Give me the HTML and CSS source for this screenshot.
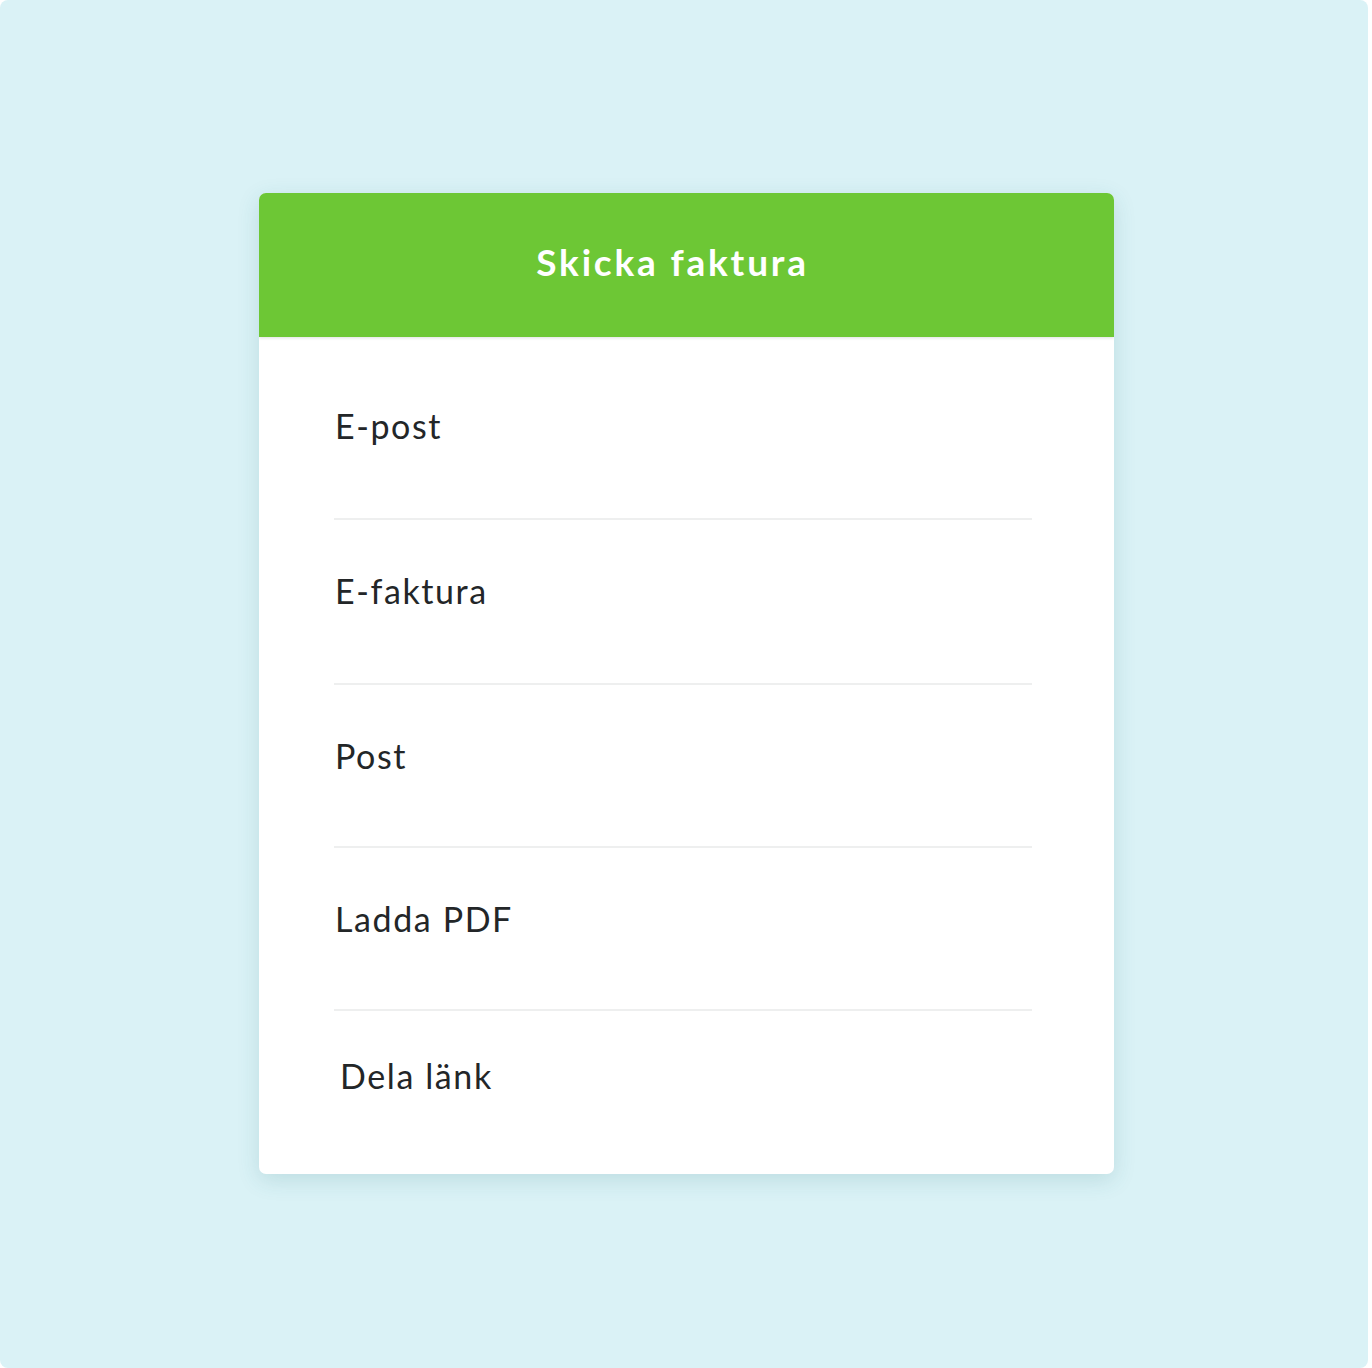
FILE: index.html
```html
<!DOCTYPE html>
<html lang="sv">
<head>
<meta charset="utf-8">
<title>Skicka faktura</title>
<link rel="stylesheet" href="styles.css">
</head>
<body>
<div class="canvas">
  <div class="card">
    <div class="card-header">Skicka faktura</div>
    <ul class="options">
      <li class="option first">E-post</li>
      <li class="option">E-faktura</li>
      <li class="option short">Post</li>
      <li class="option short">Ladda PDF</li>
      <li class="option last">Dela länk</li>
    </ul>
  </div>
</div>
</body>
</html>
```
FILE: styles.css
```css
html, body {
  margin: 0;
  padding: 0;
  background: #ffffff;
}
body {
  font-family: Lato, "Open Sans", "Liberation Sans", sans-serif;
}
.canvas {
  width: 1368px;
  height: 1368px;
  background: #daf2f6;
  border-radius: 8px;
  padding-top: 193px;
  box-sizing: border-box;
}
.card {
  margin-left: 259px;
  width: 855px;
  height: 981px;
  background: #ffffff;
  border-radius: 7px;
  box-shadow: 0 6px 22px rgba(40, 110, 120, 0.16);
  overflow: hidden;
}
.card-header {
  height: 144px;
  background: #6dc735;
  color: #ffffff;
  font-size: 37px;
  font-weight: 700;
  letter-spacing: 2.8px;
  display: flex;
  align-items: center;
  justify-content: center;
  padding-right: 28px;
  padding-bottom: 8px;
  box-sizing: border-box;
  box-shadow: 0 1px 3px rgba(0,0,0,0.12);
  position: relative;
}
.options {
  list-style: none;
  margin: 0 82px 0 75px;
  padding: 0;
}
.option {
  font-size: 34px;
  line-height: 40px;
  letter-spacing: 1.6px;
  color: #232628;
  padding: 51px 0 72px 1px;
  border-bottom: 2px solid #eeefef;
}
.option.first {
  padding-top: 69px;
}
.option.short {
  padding-bottom: 70px;
}
.option.last {
  border-bottom: none;
  padding-top: 45px;
  padding-left: 6px;
  padding-bottom: 0;
}
```
